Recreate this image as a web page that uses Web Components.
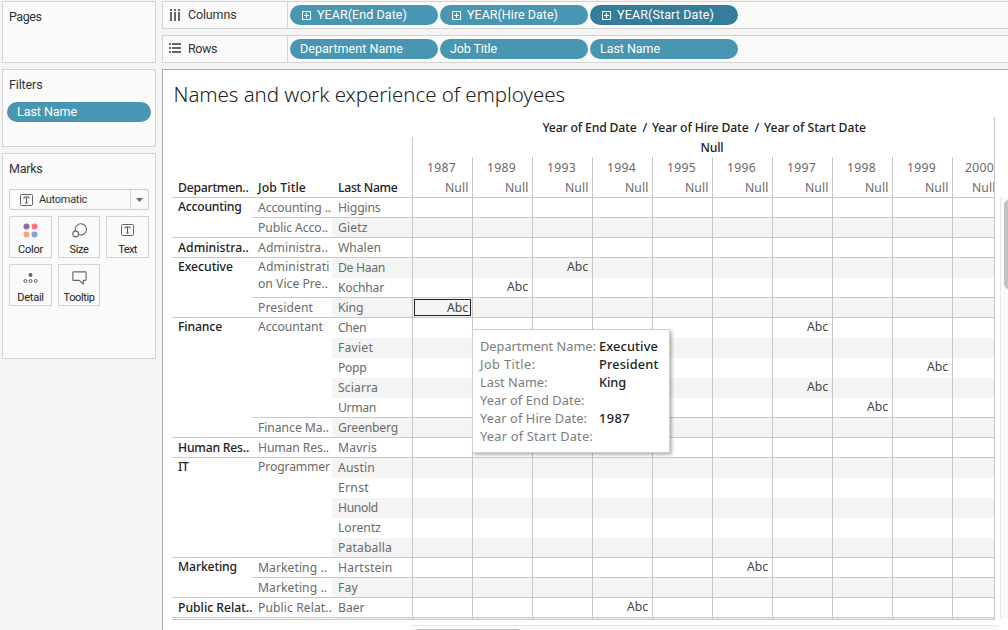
<!DOCTYPE html>
<html lang="en">
<head>
<meta charset="utf-8">
<title>Names and work experience of employees</title>
<style>
html, body { margin: 0; width: 1008px; height: 630px; overflow: hidden; background: #f4f4f4; }
body { font-family: Roboto, "Liberation Sans", sans-serif; font-size: 12.5px; color: #333; }
</style>
</head>
<body>
<work-book></work-book>
<script>
/* <fit-text w="63">: spaces its letters so that the run is w pixels wide */
class FitText extends HTMLElement {
  connectedCallback() {
    const root = this.shadowRoot || this.attachShadow({ mode: 'open' });
    root.innerHTML = '<style>:host{display:inline-block;white-space:pre;flex:none}</style><slot></slot>';
    const w = parseFloat(this.getAttribute('w'));
    const n = this.textContent.length;
    if (!w || !n) return;
    this.style.letterSpacing = '0px';
    const natural = this.getBoundingClientRect().width;
    const ls = (w - natural) / n;
    this.style.letterSpacing = ls.toFixed(3) + 'px';
  }
}
customElements.define('fit-text', FitText);

const define = (name, html) => customElements.define(name, class extends HTMLElement {
  connectedCallback() {
    if (!this.shadowRoot) this.attachShadow({ mode: 'open' }).innerHTML = html;
  }
});

define('side-panel', `
<style>
:host { display: block; box-sizing: border-box; border: 1px solid #d4d4d4; background: #fafafa; padding: 6px 4px 0; }
header { height: 18px; line-height: 18px; padding-left: 2px; font-size: 12.5px; color: #333; }
</style>
<header><slot name="title"></slot></header><slot></slot>`);

customElements.define('field-pill', class extends HTMLElement {
  connectedCallback() {
    const plus = this.hasAttribute('date')
      ? '<svg width="9" height="9" viewBox="0 0 9 9"><path d="M.5 .5h8v8h-8zM2 4.5h5M4.5 2v5" fill="none" stroke="#fff"/></svg>' : '';
    const label = this.textContent;
    this.attachShadow({ mode: 'open' }).innerHTML = `
<style>
:host { display: flex; align-items: center; box-sizing: border-box; width: 148px; height: 20px; border-radius: 10px;
  background: #4996b2; color: #fff; padding-left: 10px; font-size: 12.5px; line-height: 20px; flex: none; }
:host([dark]) { background: #367d9b; }
:host([date]) { padding-left: 12px; }
svg { margin: 1px 6px 0 0; flex: none; }
</style>${plus}<fit-text w="${this.getAttribute('w')}">${label}</fit-text>`;
    this.textContent = '';
  }
});

define('shelf-row', `
<style>
:host { display: flex; box-sizing: border-box; height: 28px; border: 1px solid #d4d4d4; border-right: 0; background: #fafafa; }
.name { display: flex; align-items: center; box-sizing: border-box; width: 125px; padding-left: 6px; border-right: 1px solid #d4d4d4; flex: none; }
.name slot[name=icon] { display: block; width: 19px; height: 12px; }
.text { padding-bottom: 2px; }
.pills { display: flex; gap: 2px; padding: 3px 0 0 2px; }
</style>
<div class="name"><slot name="icon"></slot><div class="text"><slot name="name"></slot></div></div><div class="pills"><slot></slot></div>`);

define('mark-button', `
<style>
:host { display: flex; flex-direction: column; align-items: center; box-sizing: border-box; height: 42px; border: 1px solid #d4d4d4; background: #fafafa; font-size: 11px; color: #222; }
.icon { height: 26px; display: flex; align-items: center; }
.label { line-height: 14px; height: 14px; }
</style>
<div class="icon"><slot name="icon"></slot></div><div class="label"><slot></slot></div>`);

define('marks-card', `
<style>
:host { display: block; padding: 11px 2px 0; }
.select { display: flex; align-items: center; box-sizing: border-box; height: 21px; width: 140px; border: 1px solid #ccc; border-radius: 2px; font-size: 11px; color: #333; }
.select .t { margin: 0 6px 0 10px; }
.arrow { margin-left: auto; width: 17px; height: 19px; border-left: 1px solid #d4d4d4; display: flex; align-items: center; justify-content: center; }
.grid { display: grid; grid-template-columns: 43px 42px 43px; gap: 6px; margin-top: 6px; }
svg { display: block; }
</style>
<div class="select">
<svg class="t" width="13" height="12" viewBox="0 0 13 12"><rect x=".5" y=".5" width="12" height="11" rx="1" fill="none" stroke="#666"/><path d="M4 4.5V3h5v1.5M6.5 3v6M5.2 9h2.6" fill="none" stroke="#555"/></svg>
<fit-text w="48">Automatic</fit-text>
<span class="arrow"><svg width="7" height="4"><path d="M0 0h7L3.5 4z" fill="#666"/></svg></span></div>
<div class="grid">
<mark-button><svg slot="icon" width="15" height="15"><circle cx="3.5" cy="3.5" r="3" fill="#84749b"/><circle cx="11.5" cy="3.5" r="3" fill="#fb7381"/><circle cx="3.5" cy="11.5" r="3" fill="#f3a57c"/><circle cx="11.5" cy="11.5" r="3" fill="#83a4cb"/></svg><fit-text w="25">Color</fit-text></mark-button>
<mark-button><svg slot="icon" width="15" height="15" fill="none" stroke="#666" stroke-width="1.1"><path d="M3.5 8A5.6 5.6 0 1 1 6.8 11.6"/><circle cx="3.7" cy="11" r="2.9"/></svg><fit-text w="19">Size</fit-text></mark-button>
<mark-button><svg slot="icon" width="13" height="12" viewBox="0 0 13 12"><rect x=".5" y=".5" width="12" height="11" rx="1" fill="none" stroke="#666"/><path d="M4 4.5V3h5v1.5M6.5 3v6M5.2 9h2.6" fill="none" stroke="#555"/></svg><fit-text w="18.5">Text</fit-text></mark-button>
<mark-button><svg slot="icon" width="15" height="14"><circle cx="7.5" cy="4" r="2" fill="#666"/><g fill="none" stroke="#666"><circle cx="2.4" cy="10" r="1.5"/><circle cx="7.5" cy="10" r="1.5"/><circle cx="12.6" cy="10" r="1.5"/></g></svg><fit-text w="26.5">Detail</fit-text></mark-button>
<mark-button><svg slot="icon" width="15" height="14" viewBox="0 0 15 14"><path d="M1.5 .9h12q.6 0 .6.6v7.3q0 .6-.6.6H11.2V13L7.2 9.4H1.5q-.6 0-.6-.6V1.5q0-.6.6-.6z" fill="none" stroke="#666" stroke-width="1.1"/></svg><fit-text w="31">Tooltip</fit-text></mark-button>
</div>`);

const YEARS = [1987, 1989, 1993, 1994, 1995, 1996, 1997, 1998, 1999, 2000];
/* [department, width, [[job lines, widths, [[last name, width, column of the mark]]]]] */
const DATA = [
  ['Accounting', 63.5, [[['Accounting ..'], [73], [['Higgins', 42.5]]], [['Public Acco..'], [70], [['Gietz', 29.5]]]]],
  ['Administra..', 71, [[['Administra..'], [70], [['Whalen', 43]]]]],
  ['Executive', 55, [[['Administrati', 'on Vice Pre..'], [71.5, 70], [['De Haan', 47, 2], ['Kochhar', 46, 1]]], [['President'], [55], [['King', 25.5, 0, true]]]]],
  ['Finance', 44, [[['Accountant'], [65], [['Chen', 28, 6], ['Faviet', 35], ['Popp', 28.5, 8], ['Sciarra', 40, 6], ['Urman', 38, 7]]], [['Finance Ma..'], [71], [['Greenberg', 60]]]]],
  ['Human Res..', 71, [[['Human Res..'], [71], [['Mavris', 39]]]]],
  ['IT', 10.5, [[['Programmer'], [72], [['Austin', 37], ['Ernst', 31], ['Hunold', 40], ['Lorentz', 43], ['Pataballa', 54]]]]],
  ['Marketing', 59, [[['Marketing ..'], [69], [['Hartstein', 54.5, 5]]], [['Marketing ..'], [69], [['Fay', 20]]]]],
  ['Public Relat..', 74.5, [[['Public Relat..'], [74], [['Baer', 26.5, 3]]]]]
];

customElements.define('cross-tab', class extends HTMLElement {
  connectedCallback() {
    let cells = '', r = 1;
    for (const [dept, dw, jobs] of DATA) {
      const start = r;
      let inner = '';
      for (const [lines, widths, people] of jobs) {
        inner += `<div class="job line${people.length > 1 ? ' multi' : ''}" style="grid-area:${r}/2/span ${people.length}/3">${lines.map((l, i) => `<div><fit-text w="${widths[i]}">${l}</fit-text></div>`).join('')}</div>`;
        people.forEach(([name, w, col, sel], i) => {
          const k = (r % 2 ? '' : ' band') + (i === people.length - 1 ? ' line' : '');
          inner += `<div class="last${k}" style="grid-area:${r}/3"><fit-text w="${w}">${name}</fit-text></div>`;
          YEARS.forEach((y, c) => {
            let mark = c === col ? '<fit-text w="21">Abc</fit-text>' : '';
            if (mark && sel) mark = `<span class="sel">${mark}</span>`;
            inner += `<div class="cell${k}${sel && c === col ? ' picked' : ''}" style="grid-area:${r}/${c + 4}">${mark}</div>`;
          });
          r++;
        });
      }
      cells += `<div class="dept line${r - start > 1 ? ' multi' : ''}" style="grid-area:${start}/1/span ${r - start}/2"><fit-text w="${dw}">${dept}</fit-text></div>` + inner;
    }
    let sliver = '<div class="line" style="grid-area:22/1/23/3"></div><div class="band line" style="grid-area:22/3"></div>';
    YEARS.forEach((y, c) => sliver += `<div class="cell band line" style="grid-area:22/${c + 4}"></div>`);
    this.attachShadow({ mode: 'open' }).innerHTML = `
<style>
:host { display: block; width: 823px; font: 400 12.2px "Noto Sans", sans-serif; color: #6a6a6a; }
* { box-sizing: border-box; }
.head { display: flex; border-bottom: 1px solid #c8c8c8; height: 81px; }
.labels { display: grid; grid-template-columns: 80px 80px 80px; width: 240px; align-items: end; flex: none; color: #222; font-weight: 500; line-height: 22px; }
.labels > div { padding-left: 6px; height: 20px; }
.right { width: 583px; border-right: 1px solid #c8c8c8; }
.cap { display: flex; gap: 6px; height: 20px; line-height: 21px; color: #222; font-weight: 500; padding-left: 130.5px; white-space: nowrap; }
.null { height: 20px; line-height: 21px; border-left: 1px solid #c8c8c8; color: #222; font-weight: 500; padding-left: 287.5px; }
.years { display: grid; grid-template-columns: repeat(9, 60px) 42px; height: 40px; }
.year { border-left: 1px solid #c8c8c8; line-height: 22px; overflow: hidden; }
.year div { height: 20px; white-space: nowrap; }
.year .y { padding-left: 14px; }
.year .n { padding-left: 32px; }
.year:last-child .y { padding-left: 12px; }
.year:last-child .n { padding-left: 19px; }
.body { display: grid; grid-template-columns: 80px 80px 80px repeat(9, 60px) 42px; grid-template-rows: repeat(21, 20px) 2px; border-right: 1px solid #c8c8c8; }
.dept, .job, .last { padding-left: 6px; line-height: 20px; min-height: 0; overflow: hidden; }
.dept { color: #222; font-weight: 500; }
.job.multi { line-height: 17px; }
.dept.multi { line-height: 18px; }
.line { border-bottom: 1px solid #c8c8c8; }
.band { background: #f4f4f4; }
.cell { border-left: 1px solid #c8c8c8; display: flex; justify-content: flex-end; padding-right: 4px; line-height: 18px; color: #444; min-height: 0; }
.cell.picked { padding: 1px 1px 1px 1px; }
.sel { display: flex; justify-content: flex-end; border: 1px solid #222; width: 57px; height: 17px; line-height: 15px; padding-right: 2px; flex: none; }
</style>
<div class="head">
<div class="labels"><div><fit-text w="70.5">Departmen..</fit-text></div><div><fit-text w="48">Job Title</fit-text></div><div><fit-text w="59.5">Last Name</fit-text></div></div>
<div class="right">
<div class="cap"><fit-text w="94">Year of End Date</fit-text><fit-text w="3.5">/</fit-text><fit-text w="96.5">Year of Hire Date</fit-text><fit-text w="3.5">/</fit-text><fit-text w="102">Year of Start Date</fit-text></div>
<div class="null"><fit-text w="23">Null</fit-text></div>
<div class="years">${YEARS.map(y => `<div class="year"><div class="y"><fit-text w="29">${y}</fit-text></div><div class="n"><fit-text w="23.5">Null</fit-text></div></div>`).join('')}</div>
</div></div>
<div class="body">${cells}${sliver}</div>`;
  }
});

define('mark-tooltip', `
<style>
:host { display: grid; grid-template-columns: 119px auto; grid-auto-rows: 18px; align-content: start; box-sizing: border-box; width: 198px; height: 124px; padding: 7px 7px;
  background: #fff; border: 1px solid #ccc; box-shadow: 2px 2px 3px rgba(0,0,0,.28); font: 400 12.8px/18px "Noto Sans", sans-serif; color: #7c7c7c; }
b { font-weight: 500; color: #222; }
</style>
<span><fit-text w="116">Department Name:</fit-text></span><b><fit-text w="59">Executive</fit-text></b>
<span><fit-text w="55.5">Job Title:</fit-text></span><b><fit-text w="59.5">President</fit-text></b>
<span><fit-text w="67.5">Last Name:</fit-text></span><b><fit-text w="27">King</fit-text></b>
<span><fit-text w="104.5">Year of End Date:</fit-text></span><b></b>
<span><fit-text w="107">Year of Hire Date:</fit-text></span><b><fit-text w="31">1987</fit-text></b>
<span><fit-text w="113">Year of Start Date:</fit-text></span><b></b>`);

define('work-sheet', `
<style>
:host { display: grid; grid-template-columns: 832px 1fr; grid-template-rows: 47px 503px 5px 1fr; position: relative; box-sizing: border-box; height: 561px; overflow: hidden; border: 1px solid #aaa; border-width: 1px 0 0 1px; background: #fff; }
h1 { grid-column: 1 / 3; margin: 0; padding-left: 10.5px; font: 300 20.5px/48px "Noto Sans", sans-serif; color: #222; height: 47px; }
cross-tab { margin-left: 9px; grid-area: 2 / 1; }
.v { grid-area: 2 / 2; margin: 80px 0 0 5px; height: 422px; border-left: 1px solid #e6e6e6; background: #fafafa; padding: 3px 0 0 3px; box-sizing: border-box; }
.v i { display: block; height: 89px; width: 12px; border-radius: 5px; background: #c1c1c1; }
.h { grid-area: 4 / 1 / 5 / 3; margin-left: 249px; width: 586px; height: 8px; border-top: 1px solid #e6e6e6; background: #fafafa; padding: 3px 0 0 3px; box-sizing: border-box; }
.h i { display: block; width: 107px; height: 12px; border-radius: 4px; background: #c1c1c1; }
mark-tooltip { position: absolute; left: 309px; top: 259px; }
</style>
<h1><fit-text w="391.5">Names and work experience of employees</fit-text></h1>
<cross-tab></cross-tab>
<div class="v"><i></i></div><div class="h"><i></i></div>
<mark-tooltip></mark-tooltip>`);

define('work-book', `
<style>
:host { display: grid; grid-template-columns: 154px 846px; column-gap: 6px; padding: 1px 0 0 2px; width: 1006px; height: 629px; overflow: hidden; }
.side { display: flex; flex-direction: column; gap: 6px; }
.main { display: flex; flex-direction: column; gap: 6px; }
.main work-sheet { flex: none; }
.filters field-pill { width: 144px; margin-top: 8px; }
svg { display: block; }
</style>
<div class="side">
<side-panel style="height:62px"><fit-text slot="title" w="32.5">Pages</fit-text></side-panel>
<side-panel class="filters" style="height:78px"><fit-text slot="title" w="33.5">Filters</fit-text><field-pill w="60">Last Name</field-pill></side-panel>
<side-panel style="height:206px"><fit-text slot="title" w="33.5">Marks</fit-text><marks-card></marks-card></side-panel>
</div>
<div class="main">
<shelf-row><svg slot="icon" width="12" height="12" fill="#666"><path d="M1 0h2v2H1zM5 0h2v2H5zM9 0h2v2H9zM1 3h2v9H1zM5 3h2v9H5zM9 3h2v9H9z"/></svg><fit-text slot="name" w="48.5">Columns</fit-text>
<field-pill date w="90">YEAR(End Date)</field-pill><field-pill date w="91">YEAR(Hire Date)</field-pill><field-pill date dark w="97">YEAR(Start Date)</field-pill></shelf-row>
<shelf-row><svg slot="icon" width="12" height="11" fill="#666"><path d="M0 0h2v2H0zM3 0h9v2H3zM0 4h2v2H0zM3 4h9v2H3zM0 8h2v2H0zM3 8h9v2H3z"/></svg><fit-text slot="name" w="29">Rows</fit-text>
<field-pill w="103">Department Name</field-pill><field-pill w="47">Job Title</field-pill><field-pill w="60">Last Name</field-pill></shelf-row>
<work-sheet></work-sheet>
</div>`);
</script>
</body>
</html>
